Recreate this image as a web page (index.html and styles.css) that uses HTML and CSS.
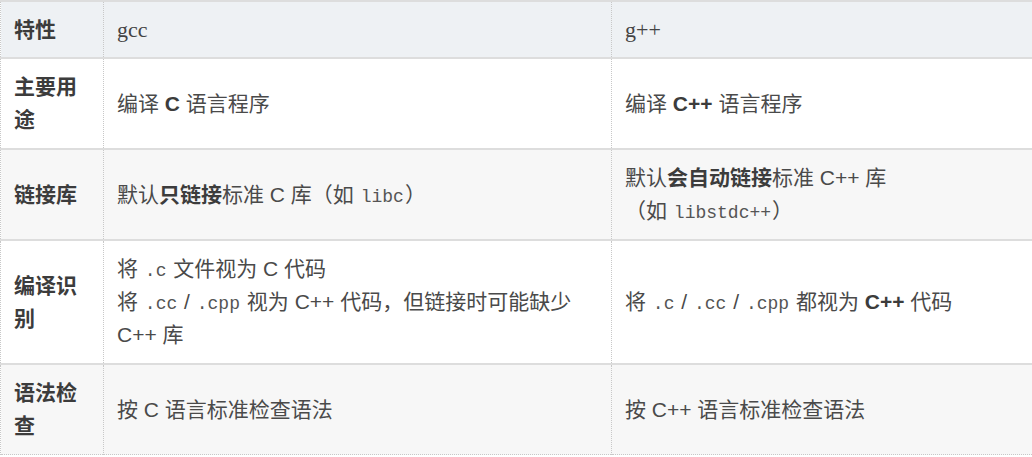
FILE: index.html
```html
<!DOCTYPE html>
<html lang="zh-CN">
<head>
<meta charset="utf-8">
<title>gcc vs g++</title>
<link rel="stylesheet" href="styles.css">
</head>
<body>
<div class="wrap">
<table class="cmp">
  <colgroup>
    <col class="c1">
    <col class="c2">
    <col class="c3">
  </colgroup>
  <thead>
    <tr class="head">
      <th class="feat">特性</th>
      <th class="tool">gcc</th>
      <th class="tool">g++</th>
    </tr>
  </thead>
  <tbody>
    <tr>
      <td class="feat">主要用途</td>
      <td>编译 <strong>C</strong> 语言程序</td>
      <td>编译 <strong>C++</strong> 语言程序</td>
    </tr>
    <tr class="alt">
      <td class="feat">链接库</td>
      <td>默认<strong>只链接</strong>标准 C 库<span class="nw">（如 <code>libc</code>）</span></td>
      <td>默认<strong>会自动链接</strong>标准 C++ 库<span class="nw">（如 <code>libstdc++</code>）</span></td>
    </tr>
    <tr>
      <td class="feat">编译识别</td>
      <td>将 <code>.c</code> 文件视为 C 代码<br>将 <code>.cc</code> / <code>.cpp</code> 视为 C++ 代码，但链接时可能缺少 C++ 库</td>
      <td>将 <code>.c</code> / <code>.cc</code> / <code>.cpp</code> 都视为 <strong>C++</strong> 代码</td>
    </tr>
    <tr class="alt">
      <td class="feat">语法检查</td>
      <td>按 C 语言标准检查语法</td>
      <td>按 C++ 语言标准检查语法</td>
    </tr>
  </tbody>
</table>
</div>
</body>
</html>
```

FILE: styles.css
```css
html, body {
  margin: 0;
  padding: 0;
  background: #ffffff;
}

.wrap {
  width: 1032px;
  overflow: hidden;
}

.cmp {
  width: 1032px;
  table-layout: fixed;
  border-collapse: collapse;
  font-family: "Liberation Sans", "Noto Sans CJK SC", sans-serif;
  font-size: 21px;
  line-height: 33px;
  color: #4a4a4a;
  border-bottom: 1px dotted #c8c8c8;
}

.c1 { width: 103px; }
.c2 { width: 508px; }
.c3 { width: 421px; }

.cmp th,
.cmp td {
  padding: 11px 13px 12px 13px;
  text-align: left;
  vertical-align: middle;
  border-left: 1px dotted #c8c8c8;
  border-right: 1px dotted #c8c8c8;
  border-top: 2px solid #dddddd;
  font-weight: normal;
}

.head th {
  background: #eef1f4;
  padding-bottom: 11px;
}

.alt td {
  background: #f7f7f7;
}

.cmp .feat {
  font-weight: bold;
  color: #3c3c3c;
}

.tool {
  font-family: "Liberation Serif", "DejaVu Serif", serif;
  font-size: 22px;
  color: #444444;
}

strong {
  font-weight: bold;
  color: #3c3c3c;
}

code {
  font-family: "Liberation Mono", "DejaVu Sans Mono", monospace;
  font-size: 18px;
  line-height: 1;
  color: #555555;
  padding: 0 1px;
}

.nw {
  white-space: nowrap;
}
```
